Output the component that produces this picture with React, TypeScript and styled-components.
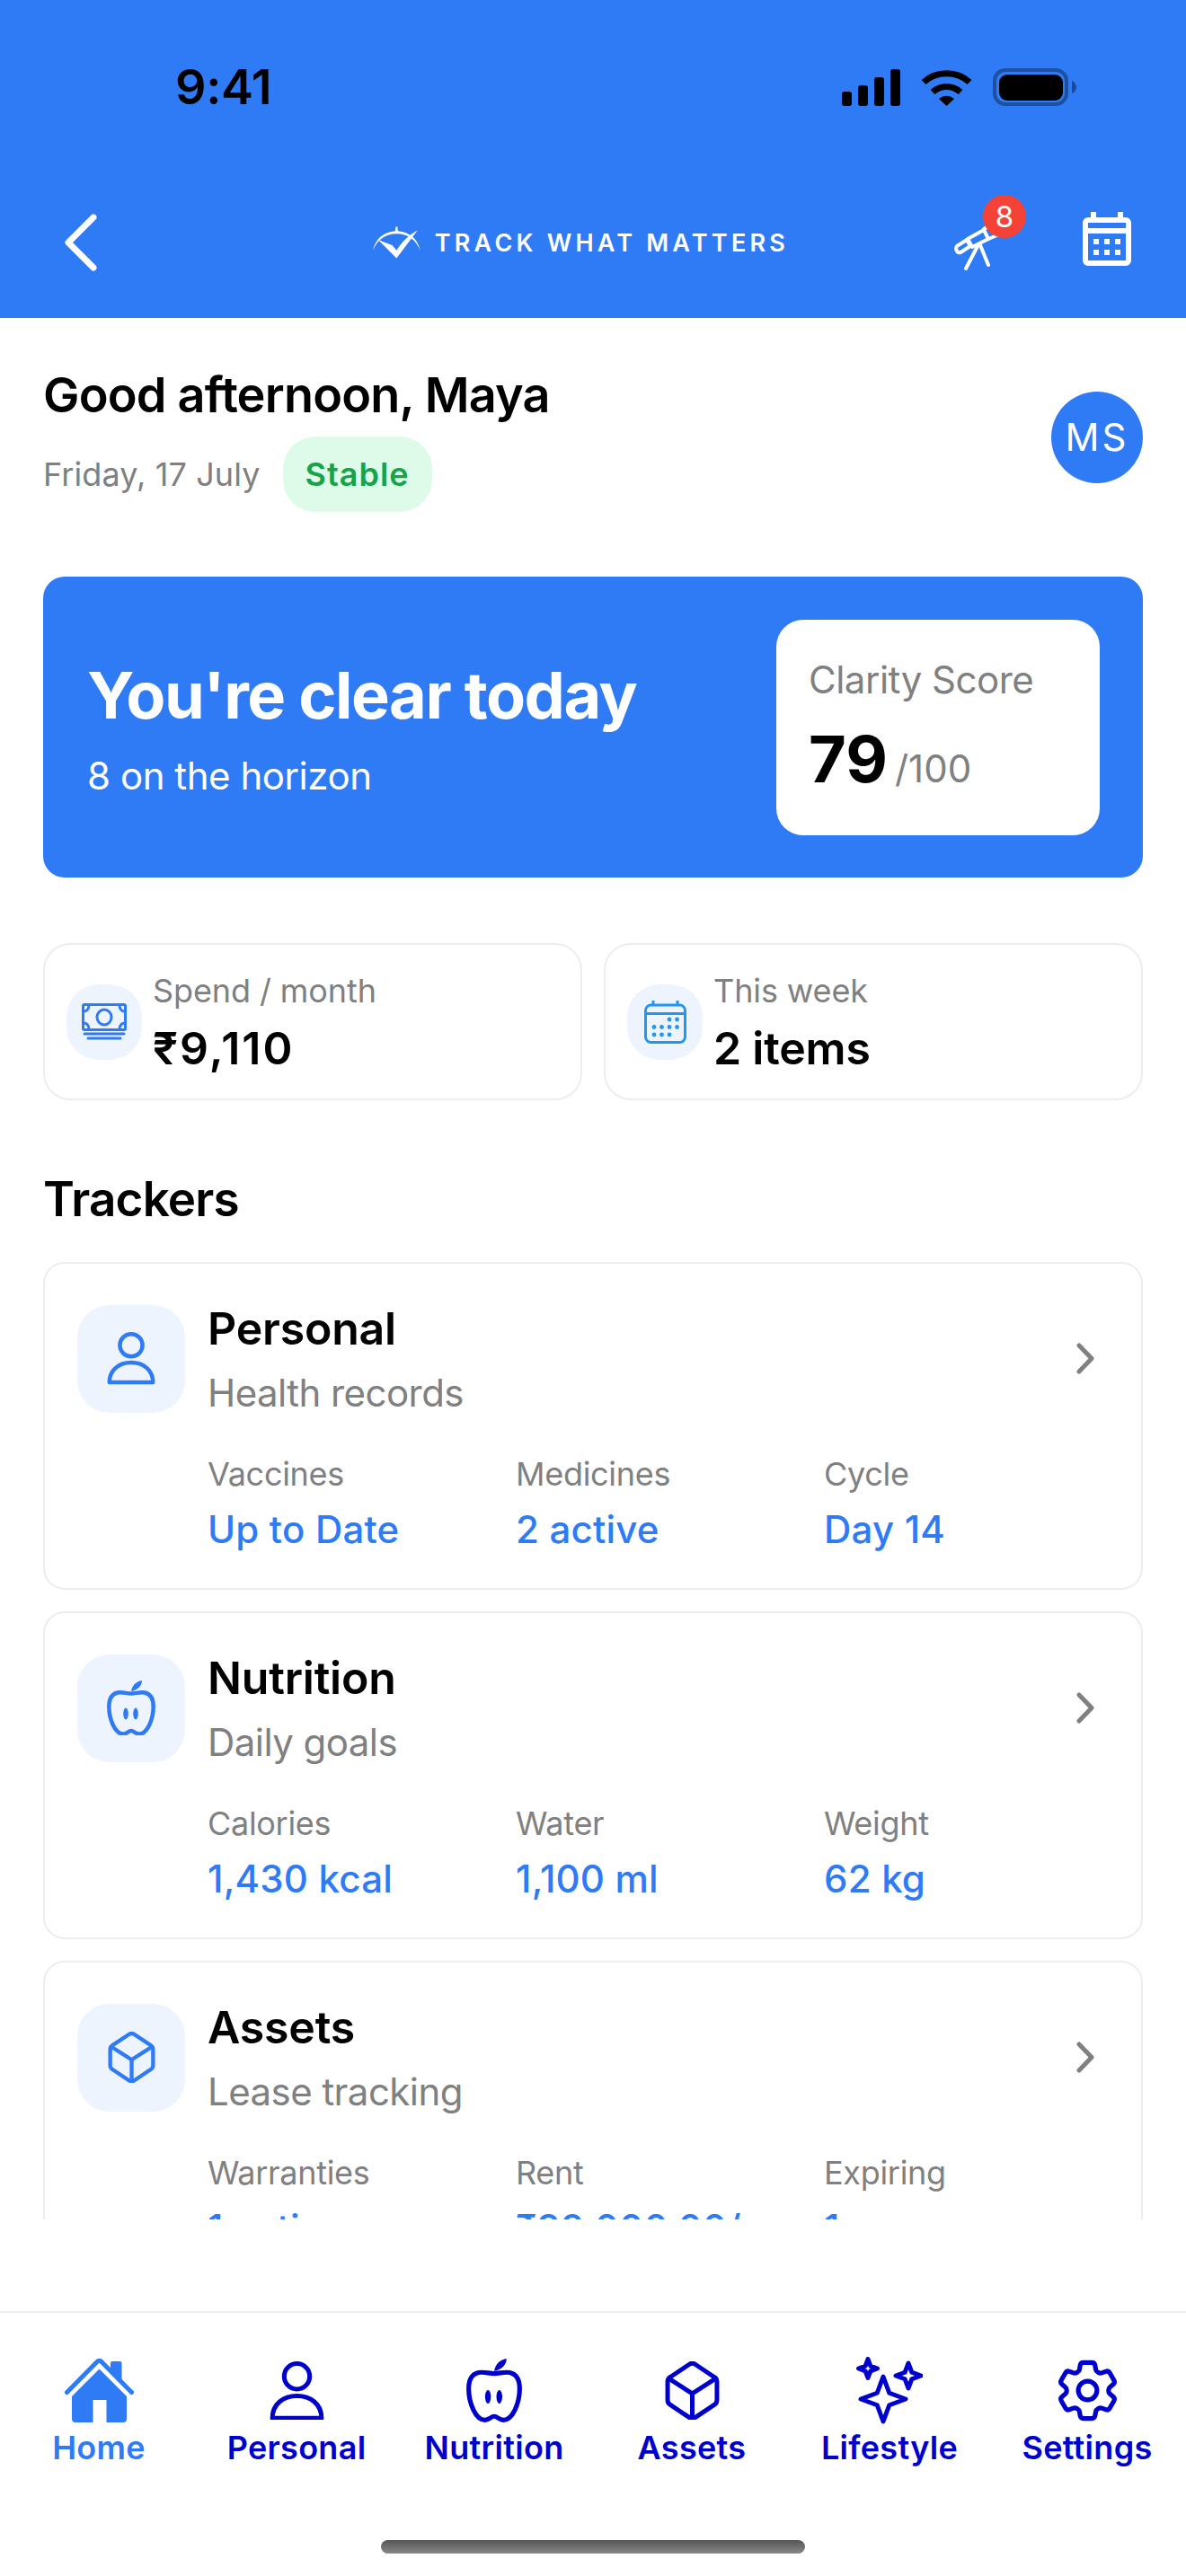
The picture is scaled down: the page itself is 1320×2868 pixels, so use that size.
import React from 'react';
import styled, { createGlobalStyle } from 'styled-components';
import { HiOutlineCog6Tooth } from 'react-icons/hi2';

const BLUE = '#2f7bf6';
const NAVY = '#0000cc';
const GRAY = '#808080';
const LINE = '#ededef';
const TILE = '#eef4fe';

const GlobalStyle = createGlobalStyle`
   * {
      box-sizing: border-box;
   }
   html,
   body {
      margin: 0;
      padding: 0;
      background: #fff;
      font-family: Inter, 'Liberation Sans', sans-serif;
   }
`;

const Page = styled.div`
   width: 1320px;
   height: 2868px;
   display: flex;
   flex-direction: column;
   overflow: hidden;
   background: #fff;
`;

const Header = styled.header`
   height: 354px;
   flex: none;
   background: ${BLUE};
   padding-top: 73px;
`;

const StatusBar = styled.div`
   height: 48px;
   display: flex;
   align-items: center;
   justify-content: space-between;
   padding: 0 122px 0 195px;
`;

const Time = styled.span`
   font-size: 54px;
   font-weight: 600;
   line-height: 48px;
   letter-spacing: -0.4px;
   color: #000;
`;

const StatusIcons = styled.div`
   display: flex;
   align-items: center;
   gap: 23px;
`;

const TopNav = styled.div`
   display: grid;
   grid-template-columns: 343px 463px 1fr;
   align-items: center;
   height: 72px;
   margin-top: 113px;
   padding: 0 61px 0 72px;
`;

const Logo = styled.div`
   display: flex;
   align-items: center;
   gap: 16px;
   color: #fff;
`;

const LogoText = styled.span`
   font-size: 27px;
   font-weight: 600;
   letter-spacing: 4.2px;
   white-space: nowrap;
`;

const TopActions = styled.div`
   display: flex;
   align-items: center;
   justify-content: flex-end;
   gap: 78px;
`;

const TelescopeWrap = styled.div`
   position: relative;
   width: 65px;
   height: 56px;
   margin-top: 6px;
`;

const CalendarSlot = styled.div`
   display: flex;
   margin-top: -8px;
`;

const Badge = styled.span`
   position: absolute;
   top: -28px;
   left: 32px;
   width: 48px;
   height: 48px;
   border-radius: 50%;
   background: #f44336;
   color: #fff;
   font-size: 33px;
   line-height: 48px;
   text-align: center;
`;

const Scroll = styled.main`
   height: 2117px;
   flex: none;
   overflow: hidden;
   padding: 50px 48px 0;
`;

const Greeting = styled.section`
   display: flex;
   align-items: center;
   justify-content: space-between;
`;

const Hello = styled.h1`
   margin: 0;
   font-size: 54px;
   font-weight: 600;
   line-height: 72px;
   letter-spacing: -0.8px;
   color: #000;
`;

const Meta = styled.div`
   display: flex;
   align-items: center;
   gap: 25px;
   margin-top: 10px;
`;

const DateText = styled.span`
   font-size: 36px;
   letter-spacing: 0.1px;
   color: ${GRAY};
`;

const Pill = styled.span`
   height: 84px;
   padding: 0 25px;
   border-radius: 36px;
   background: #ddfbe8;
   color: #16a34a;
   font-size: 36px;
   font-weight: 600;
   letter-spacing: 1px;
   line-height: 84px;
`;

const Avatar = styled.div`
   width: 102px;
   height: 102px;
   border-radius: 50%;
   background: ${BLUE};
   color: #fff;
   font-size: 42px;
   font-weight: 400;
   letter-spacing: 3px;
   line-height: 102px;
   text-align: center;
`;

const Hero = styled.section`
   height: 335px;
   margin-top: 72px;
   padding: 0 48px 0 49px;
   display: flex;
   align-items: center;
   justify-content: space-between;
   border-radius: 24px;
   background: ${BLUE};
   color: #fff;
`;

const HeroTitle = styled.h2`
   margin: 3px 0 0;
   font-size: 72px;
   font-weight: 700;
   line-height: 84px;
   letter-spacing: -1.5px;
`;

const HeroSub = styled.p`
   margin: 22px 0 0;
   font-size: 42px;
   line-height: 52px;
   letter-spacing: -0.45px;
`;

const ScoreCard = styled.div`
   width: 360px;
   height: 240px;
   padding: 41px 36px 0;
   border-radius: 30px;
   background: #fff;
`;

const ScoreLabel = styled.div`
   font-size: 42px;
   line-height: 52px;
   letter-spacing: -0.5px;
   color: ${GRAY};
`;

const ScoreRow = styled.div`
   display: flex;
   align-items: baseline;
   gap: 8px;
   margin-top: 20px;
`;

const ScoreValue = styled.span`
   font-size: 72px;
   font-weight: 700;
   line-height: 84px;
   color: #000;
`;

const ScoreMax = styled.span`
   font-size: 42px;
   color: ${GRAY};
`;

const StatRow = styled.section`
   display: grid;
   grid-template-columns: repeat(2, 1fr);
   gap: 24px;
   margin-top: 73px;
`;

const StatCard = styled.div`
   height: 175px;
   padding: 0 24px;
   display: flex;
   align-items: center;
   gap: 12px;
   border: 2px solid ${LINE};
   border-radius: 30px;
`;

const Tile = styled.div<{ $size: number; $radius: number }>`
   width: ${p => p.$size}px;
   height: ${p => p.$size}px;
   flex: none;
   display: flex;
   align-items: center;
   justify-content: center;
   border-radius: ${p => p.$radius}px;
   background: ${TILE};
`;

const StatLabel = styled.div`
   font-size: 36px;
   line-height: 46px;
   letter-spacing: -0.1px;
   color: ${GRAY};
`;

const StatValue = styled.div<{ $tracking: number }>`
   margin-top: 12px;
   font-size: 50px;
   font-weight: 600;
   line-height: 58px;
   letter-spacing: ${p => p.$tracking}px;
   color: #000;
`;

const SectionTitle = styled.h2`
   margin: 75px 0 35px;
   font-size: 53px;
   font-weight: 600;
   line-height: 70px;
   letter-spacing: -0.8px;
   color: #000;
`;

const CardList = styled.div`
   display: flex;
   flex-direction: column;
   gap: 24px;
`;

const Card = styled.article`
   height: 365px;
   flex: none;
   padding: 42px 52px 0 36px;
   border: 2px solid ${LINE};
   border-radius: 24px;
`;

const CardHead = styled.div`
   display: flex;
   align-items: center;
   gap: 25px;
`;

const CardText = styled.div`
   flex: 1;
`;

const CardTitle = styled.h3`
   margin: 0;
   font-size: 50px;
   font-weight: 600;
   line-height: 60px;
   letter-spacing: -0.2px;
   color: #000;
`;

const CardSub = styled.p`
   margin: 17px 0 0;
   font-size: 42px;
   line-height: 50px;
   letter-spacing: -0.55px;
   color: ${GRAY};
`;

const Metrics = styled.div`
   display: grid;
   grid-template-columns: repeat(3, 343px);
   margin: 42px 0 0 145px;
`;

const MetricLabel = styled.div`
   font-size: 36px;
   line-height: 46px;
   letter-spacing: -0.3px;
   color: ${GRAY};
`;

const MetricValue = styled.div`
   margin-top: 13px;
   font-size: 42px;
   font-weight: 500;
   line-height: 52px;
   letter-spacing: 0.2px;
   color: ${BLUE};
`;

const BottomNav = styled.nav`
   margin-top: auto;
   flex: none;
   height: 295px;
   border-top: 2px solid ${LINE};
   padding-top: 49px;
`;

const NavGrid = styled.div`
   display: grid;
   grid-template-columns: repeat(6, 220px);
`;

const NavItem = styled.div<{ $active?: boolean }>`
   display: flex;
   flex-direction: column;
   align-items: center;
   color: ${p => (p.$active ? BLUE : NAVY)};
`;

const NavIcon = styled.div`
   height: 75px;
   display: flex;
   align-items: center;
   justify-content: center;
   overflow: visible;
`;

const NavLabel = styled.span`
   margin-top: 2px;
   font-size: 36px;
   font-weight: 600;
   line-height: 48px;
   letter-spacing: 0.3px;
`;

const HomeBar = styled.div`
   width: 472px;
   height: 15px;
   margin: 79px auto 0;
   border-radius: 8px;
   background: linear-gradient(#555, #888);
`;

const Signal = () => (
   <svg width="65" height="41" viewBox="0 0 65 41" fill="#000">
      <rect x="0" y="25" width="11" height="16" rx="3" />
      <rect x="18" y="18" width="11" height="23" rx="3" />
      <rect x="36" y="9" width="11" height="32" rx="3" />
      <rect x="54" y="0" width="11" height="41" rx="3" />
   </svg>
);

const Wifi = () => (
   <svg width="57" height="41" viewBox="0 0 57 41" fill="none" stroke="#000" strokeWidth="7">
      <path d="M3 14.5 C17 1.5 40 1.5 54 14.5" />
      <path d="M13 25.5 C22 17.5 35 17.5 44 25.5" />
      <path d="M20 33 C25 28.5 32 28.5 37 33 L28.5 41 Z" fill="#000" stroke="none" />
   </svg>
);

const Battery = () => (
   <svg width="93" height="42" viewBox="0 0 93 42">
      <rect x="2" y="2" width="80" height="38" rx="12" fill="none" stroke="#000" strokeOpacity="0.35" strokeWidth="4" />
      <rect x="7" y="7" width="71" height="29" rx="9" fill="#000" />
      <path d="M88 14 C91 15 93 18 93 21 C93 24 91 27 88 28 Z" fill="#000" fillOpacity="0.4" />
   </svg>
);

const BackIcon = () => (
   <svg width="36" height="64" viewBox="0 0 36 64" fill="none" stroke="#fff" strokeWidth="7" strokeLinecap="round" strokeLinejoin="round">
      <path d="M32 4 L4 32 L32 60" />
   </svg>
);

const LogoMark = () => (
   <svg width="54" height="36" viewBox="0 0 54 36" fill="#fff">
      <path d="M26 0 L28 0 L28.5 5 C42 6 51 14 54 27 C49 15 40 8 27 8 C14 8 5 15 0 27 C3 14 12 6 25.5 5 Z" />
      <path d="M6 15 L22 21 L27 27 C33 17 41 10 51 4 L27 36 Z M27 36 L19 20 Z" />
   </svg>
);

const Telescope = () => (
   <svg width="65" height="56" viewBox="0 0 65 56" fill="none" stroke="#fff" strokeWidth="4" strokeLinecap="round" strokeLinejoin="round">
      <path d="M3 29 L14 22 L18 29 L7 36 C3 37 1 32 3 29 Z" />
      <path d="M15 21 L33 11 L38 21 L20 30 Z" />
      <path d="M33 10 L43 4 L50 16 L38 21" />
      <path d="M26 29 L13 54 M29 28 L38 50" />
   </svg>
);

const CalendarIcon = () => (
   <svg width="54" height="60" viewBox="0 0 54 60" fill="#fff">
      <rect x="3" y="9" width="48" height="48" rx="3" fill="none" stroke="#fff" strokeWidth="6" />
      <rect x="3" y="18" width="48" height="6" />
      <rect x="9" y="0" width="6" height="8" />
      <rect x="39" y="0" width="6" height="8" />
      {[12, 24, 36].map(x => (
         <React.Fragment key={x}>
            <rect x={x} y="30" width="6" height="6" />
            <rect x={x} y="42" width="6" height="6" />
         </React.Fragment>
      ))}
   </svg>
);

const MoneyIcon = () => (
   <svg width="50" height="41" viewBox="0 0 50 41" fill="none" stroke={BLUE} strokeWidth="3">
      <rect x="1.5" y="1.5" width="47" height="28" rx="1.5" />
      <ellipse cx="25" cy="15.5" rx="8" ry="8.5" />
      <path d="M2 9 C5 9 8 7 8 2 M48 9 C45 9 42 7 42 2 M2 22 C5 22 8 24 8 29 M48 22 C45 22 42 24 42 29" />
      <path d="M3 34 H47 M7 39 H43" strokeLinecap="round" />
   </svg>
);

const WeekIcon = () => (
   <svg width="47" height="48" viewBox="0 0 47 48" fill="none" stroke="#2196f3" strokeWidth="3">
      <rect x="1.5" y="5" width="44" height="41.5" rx="6" />
      <path d="M2 14.5 H45 M10 0 V5 M37 0 V5" />
      <g fill="#2196f3" stroke="none">
         {[[28, 21], [36.5, 21], [11, 29.5], [19.5, 29.5], [28, 29.5], [36.5, 29.5], [11, 38], [19.5, 38], [28, 38]].map(([cx, cy]) => (
            <circle key={`${cx}-${cy}`} cx={cx} cy={cy} r="2.4" />
         ))}
      </g>
   </svg>
);

const HomeIcon = () => (
   <svg width="77" height="71" viewBox="0 0 77 71" fill="currentColor">
      <path d="M2.5 37.5 L36 3.5 Q38.5 1 41 3.5 L74.5 37.5" fill="none" stroke="currentColor" strokeWidth="5" strokeLinecap="round" strokeLinejoin="round" />
      <path d="M51 13 V5 Q51 3 53 3 H61.5 Q63.5 3 63.5 5 V27 Z" />
      <path d="M38.5 11.5 L69 42 V67 Q69 71 65 71 H46.5 V46 H31.5 V71 H12 Q8 71 8 67 V42 Z" />
   </svg>
);

type IconProps = { size: number; color: string };

const PersonIcon = ({ size, color }: IconProps) => (
   <svg width={size} height={size * 1.08} viewBox="0 0 60 65" fill="none" stroke={color} strokeWidth="5" strokeLinejoin="round">
      <ellipse cx="30" cy="16.5" rx="14" ry="14" />
      <path d="M3 62.5 C3 47 15 38 30 38 C45 38 57 47 57 62.5 Z" />
   </svg>
);

const AppleIcon = ({ size, color }: IconProps) => (
   <svg width={size} height={size * 1.148} viewBox="0 0 54 62" fill="none" stroke={color} strokeWidth="4.5">
      <path d="M27 14.5 C22 14.5 17 12.5 12 13.5 C5 15 2.3 21 2.3 29 C2.3 43 9 59.5 18 59.5 C22 59.5 24 56 27 56 C30 56 32 59.5 36 59.5 C45 59.5 51.7 43 51.7 29 C51.7 21 49 15 42 13.5 C37 12.5 32 14.5 27 14.5 Z" />
      <path d="M27 12 C28 6 32 1 39 0 C39 6 34 11 27 12 Z" fill={color} stroke="none" />
      <ellipse cx="21" cy="37" rx="2.8" ry="6.5" fill={color} stroke="none" />
      <ellipse cx="32" cy="37" rx="2.8" ry="6.5" fill={color} stroke="none" />
   </svg>
);

const CubeIcon = ({ size, color }: IconProps) => (
   <svg width={size} height={size * 1.08} viewBox="0 0 61 66" fill="none" stroke={color} strokeWidth="5" strokeLinejoin="round">
      <path d="M27 3.5 a6 6 0 0 1 7 0 l21 14 a6 6 0 0 1 3 5 v21 a6 6 0 0 1 -3 5 l-21 14 a6 6 0 0 1 -7 0 l-21 -14 a6 6 0 0 1 -3 -5 v-21 a6 6 0 0 1 3 -5 Z" />
      <path d="M4 19 L30.5 36 L57 19 M30.5 36 V64" />
   </svg>
);

const stars = [
   { cx: 30, cy: 47, h: 25 },
   { cx: 13, cy: 13, h: 10.5 },
   { cx: 58, cy: 21, h: 14 },
];

const SparklesIcon = ({ color }: { color: string }) => (
   <svg width="74" height="75" viewBox="0 0 74 75" fill="none" stroke={color} strokeWidth="5" strokeLinejoin="round">
      {stars.map(({ cx, cy, h }) => {
         const k = h * 0.27;
         return (
            <path
               key={cx}
               d={`M${cx} ${cy - h} L${cx + k} ${cy - k} L${cx + h} ${cy} L${cx + k} ${cy + k} L${cx} ${cy + h} L${cx - k} ${cy + k} L${cx - h} ${cy} L${cx - k} ${cy - k} Z`}
            />
         );
      })}
   </svg>
);

const ChevronIcon = () => (
   <svg width="20" height="35" viewBox="0 0 20 35" fill="none" stroke={GRAY} strokeWidth="5" strokeLinecap="round" strokeLinejoin="round">
      <path d="M3 3 L17 17.5 L3 32" />
   </svg>
);

const trackers = [
   {
      title: 'Personal',
      sub: 'Health records',
      Icon: PersonIcon,
      size: 54,
      metrics: [
         ['Vaccines', 'Up to Date'],
         ['Medicines', '2 active'],
         ['Cycle', 'Day 14'],
      ],
   },
   {
      title: 'Nutrition',
      sub: 'Daily goals',
      Icon: AppleIcon,
      size: 54,
      metrics: [
         ['Calories', '1,430 kcal'],
         ['Water', '1,100 ml'],
         ['Weight', '62 kg'],
      ],
   },
   {
      title: 'Assets',
      sub: 'Lease tracking',
      Icon: CubeIcon,
      size: 53,
      metrics: [
         ['Warranties', '1 active'],
         ['Rent', '₹32,000.00/'],
         ['Expiring', '1'],
      ],
   },
];

const App: React.FC = () => (
   <Page>
      <GlobalStyle />
      <Header>
         <StatusBar>
            <Time>9:41</Time>
            <StatusIcons>
               <Signal />
               <Wifi />
               <Battery />
            </StatusIcons>
         </StatusBar>
         <TopNav>
            <BackIcon />
            <Logo>
               <LogoMark />
               <LogoText>TRACK WHAT MATTERS</LogoText>
            </Logo>
            <TopActions>
               <TelescopeWrap>
                  <Telescope />
                  <Badge>8</Badge>
               </TelescopeWrap>
               <CalendarSlot>
                  <CalendarIcon />
               </CalendarSlot>
            </TopActions>
         </TopNav>
      </Header>
      <Scroll>
         <Greeting>
            <div>
               <Hello>Good afternoon, Maya</Hello>
               <Meta>
                  <DateText>Friday, 17 July</DateText>
                  <Pill>Stable</Pill>
               </Meta>
            </div>
            <Avatar>MS</Avatar>
         </Greeting>
         <Hero>
            <div>
               <HeroTitle>You're clear today</HeroTitle>
               <HeroSub>8 on the horizon</HeroSub>
            </div>
            <ScoreCard>
               <ScoreLabel>Clarity Score</ScoreLabel>
               <ScoreRow>
                  <ScoreValue>79</ScoreValue>
                  <ScoreMax>/100</ScoreMax>
               </ScoreRow>
            </ScoreCard>
         </Hero>
         <StatRow>
            <StatCard>
               <Tile $size={84} $radius={36}>
                  <MoneyIcon />
               </Tile>
               <div>
                  <StatLabel>Spend / month</StatLabel>
                  <StatValue $tracking={2}>₹9,110</StatValue>
               </div>
            </StatCard>
            <StatCard>
               <Tile $size={84} $radius={36}>
                  <WeekIcon />
               </Tile>
               <div>
                  <StatLabel>This week</StatLabel>
                  <StatValue $tracking={-0.2}>2 items</StatValue>
               </div>
            </StatCard>
         </StatRow>
         <SectionTitle>Trackers</SectionTitle>
         <CardList>
            {trackers.map(({ title, sub, Icon, size, metrics }) => (
               <Card key={title}>
                  <CardHead>
                     <Tile $size={120} $radius={36}>
                        <Icon size={size} color={BLUE} />
                     </Tile>
                     <CardText>
                        <CardTitle>{title}</CardTitle>
                        <CardSub>{sub}</CardSub>
                     </CardText>
                     <ChevronIcon />
                  </CardHead>
                  <Metrics>
                     {metrics.map(([label, value]) => (
                        <div key={label}>
                           <MetricLabel>{label}</MetricLabel>
                           <MetricValue>{value}</MetricValue>
                        </div>
                     ))}
                  </Metrics>
               </Card>
            ))}
         </CardList>
      </Scroll>
      <BottomNav>
         <NavGrid>
            <NavItem $active>
               <NavIcon>
                  <HomeIcon />
               </NavIcon>
               <NavLabel>Home</NavLabel>
            </NavItem>
            <NavItem>
               <NavIcon>
                  <PersonIcon size={61} color={NAVY} />
               </NavIcon>
               <NavLabel>Personal</NavLabel>
            </NavItem>
            <NavItem>
               <NavIcon>
                  <AppleIcon size={62} color={NAVY} />
               </NavIcon>
               <NavLabel>Nutrition</NavLabel>
            </NavItem>
            <NavItem>
               <NavIcon>
                  <CubeIcon size={61} color={NAVY} />
               </NavIcon>
               <NavLabel>Assets</NavLabel>
            </NavItem>
            <NavItem>
               <NavIcon>
                  <SparklesIcon color={NAVY} />
               </NavIcon>
               <NavLabel>Lifestyle</NavLabel>
            </NavItem>
            <NavItem>
               <NavIcon>
                  <HiOutlineCog6Tooth size={83} />
               </NavIcon>
               <NavLabel>Settings</NavLabel>
            </NavItem>
         </NavGrid>
         <HomeBar />
      </BottomNav>
   </Page>
);

export default App;
